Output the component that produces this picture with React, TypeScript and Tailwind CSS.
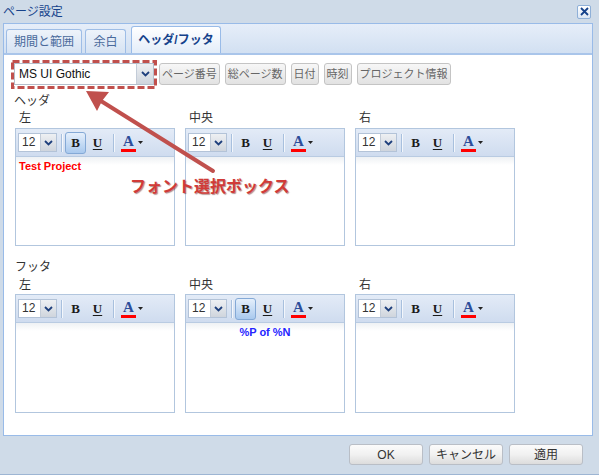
import React from 'react';

const jp = "font-['Liberation_Sans','Noto_Sans_CJK_JP',sans-serif]";

const Chevron = () => (
    <svg width="9" height="6" viewBox="0 0 9 6">
        <path d="M1 1 L4.5 4.5 L8 1" fill="none" stroke="#1e3f7c" strokeWidth="1.8" />
    </svg>
);

const SizeBox = () => (
    <div className="flex h-[19px] w-[39px] border border-[#b3c3d8] bg-white">
        <div className="flex-1 pl-[3px] text-[12px] leading-[17px] text-[#333]">12</div>
        <div className="flex w-[16px] items-center justify-center border-l border-[#c3ccd8] bg-gradient-to-b from-[#eef0f3] to-[#cfd5dd]">
            <Chevron />
        </div>
    </div>
);

const Sep = ({ ml }: { ml: string }) => (
    <div className={`h-[18px] w-[2px] border-l border-[#a8c0de] bg-white/70 ${ml}`} />
);

const Toolbar = ({ bold }: { bold?: boolean }) => (
    <div className="flex h-[28px] items-center border-b border-[#b9cbe2] bg-gradient-to-b from-[#e3ebf7] to-[#cfdcef] pl-[2px]">
        <SizeBox />
        <Sep ml="ml-[4px]" />
        <div
            className={
                bold
                    ? 'ml-[2px] flex h-[22px] w-[21px] items-center justify-center rounded-[3px] border border-[#84a9d6] bg-gradient-to-b from-[#e5effb] to-[#a9c9ee]'
                    : 'ml-[2px] flex h-[22px] w-[21px] items-center justify-center'
            }
        >
            <span className="font-['Liberation_Serif',serif] text-[13px] font-bold leading-none text-[#1a1a1a]">B</span>
        </div>
        <div className="ml-[1px] flex h-[22px] w-[21px] items-center justify-center">
            <span className="font-['Liberation_Serif',serif] text-[13px] font-bold leading-none text-[#1a1a1a] underline underline-offset-2">U</span>
        </div>
        <Sep ml="ml-[5px]" />
        <div className="ml-[6px] flex h-[22px] items-center">
            <div className="flex w-[15px] flex-col items-center">
                <span className="font-['Liberation_Serif',serif] text-[15px] font-bold leading-[14px] text-[#2c4d9a]">A</span>
                <div className="mt-[1px] h-[3px] w-[15px] bg-[#ff0000]" />
            </div>
            <svg className="ml-[2px]" width="5" height="3" viewBox="0 0 5 3">
                <path d="M0 0 L5 0 L2.5 3 Z" fill="#222" />
            </svg>
        </div>
    </div>
);

const Editor = ({ label, h, bold, children, labelPt }: { label: string; h: string; bold?: boolean; children?: React.ReactNode; labelPt: string }) => (
    <div className="w-[160px]">
        <div className={`h-[20px] pl-[4px] text-[12px] leading-[14px] text-[#333] ${labelPt}`}>{label}</div>
        <div className={`flex flex-col border border-[#b2c6de] bg-white ${h}`}>
            <Toolbar bold={bold} />
            <div className="flex-1 bg-gradient-to-b from-[#eef1f4] to-white to-[8px] pt-[3px]">{children}</div>
        </div>
    </div>
);

const ToolButton = ({ children }: { children: React.ReactNode }) => (
    <div className="flex h-[22px] items-center rounded-[3px] border border-[#c4c4c4] bg-gradient-to-b from-[#f7f7f7] to-[#e2e2e2] px-[2px] text-[11px] text-[#666]">
        {children}
    </div>
);

const FootButton = ({ children }: { children: React.ReactNode }) => (
    <div className="flex h-[21px] w-[74px] items-center justify-center rounded-[3px] border border-[#b9bec6] bg-gradient-to-b from-[#fbfbfb] via-[#f1f1f1] to-[#dcdcdc] text-[12px] text-[#333]">
        {children}
    </div>
);

export default function App() {
    return (
        <div className={`relative flex h-[475px] w-[599px] flex-col overflow-hidden border-b border-[#9db5d3] bg-[#cfdbe8] ${jp}`}>
            {/* title bar */}
            <div className="flex h-[23px] items-center justify-between pl-[3px] pr-[8px]">
                <span className="text-[12px] text-[#15428b]">ページ設定</span>
                <div className="flex h-[14px] w-[14px] items-center justify-center rounded-[2px] border border-[#8fb0d8] bg-gradient-to-b from-white to-[#dbe6f4]">
                    <svg width="9" height="9" viewBox="0 0 9 9">
                        <path d="M1 1 L8 8 M8 1 L1 8" stroke="#15428b" strokeWidth="1.8" />
                    </svg>
                </div>
            </div>

            {/* tab panel */}
            <div className="ml-[3px] flex w-[590px] flex-col border border-[#99bbe8]">
                <div className="flex h-[31px] items-end gap-[3px] border-b-[2px] border-[#a9c5ea] bg-gradient-to-b from-[#e6eef9] to-[#d2e0f2] pl-[2px]">
                    <div className="flex h-[24px] w-[76px] items-center justify-center rounded-t-[3px] border border-b-0 border-[#9ebde6] bg-gradient-to-b from-[#eef3fa] to-[#d6e3f3] text-[12px] text-[#4a6a9c]">
                        期間と範囲
                    </div>
                    <div className="flex h-[24px] w-[41px] items-center justify-center rounded-t-[3px] border border-b-0 border-[#9ebde6] bg-gradient-to-b from-[#eef3fa] to-[#d6e3f3] text-[12px] text-[#4a6a9c]">
                        余白
                    </div>
                    <div className="ml-[2px] flex h-[27px] w-[90px] items-center justify-center rounded-t-[3px] border border-b-0 border-[#99bbe8] bg-gradient-to-b from-[#ffffff] to-[#e3edf9] text-[12px] font-bold text-[#15428b]">
                        ヘッダ/フッタ
                    </div>
                </div>

                <div className="h-[380px] bg-white pt-[5px] text-[#333]">
                    {/* font row */}
                    <div className="flex h-[29px] items-start pl-[7px]">
                        <div className="relative h-[29px] w-[146px] p-[3px]">
                            <div className="flex h-[22px] border border-[#b5bfcc] bg-white">
                                <div className="flex-1 pl-[4px] text-[12px] leading-[20px] text-[#111]">MS UI Gothic</div>
                                <div className="flex w-[17px] items-center justify-center border-l border-[#c3ccd8] bg-gradient-to-b from-[#eef0f3] to-[#cfd5dd]">
                                    <Chevron />
                                </div>
                            </div>
                            <svg className="pointer-events-none absolute inset-0" width="146" height="29">
                                <rect x="1.5" y="1.5" width="143" height="26" fill="none" stroke="#c0504d" strokeWidth="3" strokeDasharray="7 3" />
                            </svg>
                        </div>
                        <div className="ml-[2px] mt-[3px] flex gap-[5px]">
                            <ToolButton>ページ番号</ToolButton>
                            <ToolButton>総ページ数</ToolButton>
                            <ToolButton>日付</ToolButton>
                            <ToolButton>時刻</ToolButton>
                            <ToolButton>プロジェクト情報</ToolButton>
                        </div>
                    </div>

                    {/* header */}
                    <div className="mt-[5px] h-[14px] pl-[10px] text-[12px] leading-[14px]">ヘッダ</div>
                    <div className="flex gap-[10px] pl-[11px]">
                        <Editor label="左" h="h-[118px]" bold labelPt="pt-[3px]">
                            <div className="pl-[3px] font-['Liberation_Sans',sans-serif] text-[11px] font-bold leading-[13px] text-[#ff0000]">Test Project</div>
                        </Editor>
                        <Editor label="中央" h="h-[118px]" labelPt="pt-[3px]" />
                        <Editor label="右" h="h-[118px]" labelPt="pt-[3px]" />
                    </div>

                    {/* footer */}
                    <div className="mt-[14px] h-[14px] pl-[11px] text-[12px] leading-[14px]">フッタ</div>
                    <div className="flex gap-[10px] pl-[11px]">
                        <Editor label="左" h="h-[119px]" labelPt="pt-[4px]" />
                        <Editor label="中央" h="h-[119px]" bold labelPt="pt-[4px]">
                            <div className="text-center font-['Liberation_Sans',sans-serif] text-[11px] font-bold leading-[13px] text-[#2424ff]">%P of %N</div>
                        </Editor>
                        <Editor label="右" h="h-[119px]" labelPt="pt-[4px]" />
                    </div>
                </div>
            </div>

            {/* buttons */}
            <div className="flex justify-end gap-[6px] pr-[16px] pt-[8px]">
                <FootButton>OK</FootButton>
                <FootButton>キャンセル</FootButton>
                <FootButton>適用</FootButton>
            </div>

            {/* annotation */}
            <svg className="pointer-events-none absolute left-0 top-0" width="599" height="475">
                <line x1="213" y1="171" x2="101" y2="101" stroke="#c0504d" strokeWidth="4" strokeLinecap="round" />
                <path d="M86 91 L109 92 L102 101 L97 111 Z" fill="#c0504d" />
            </svg>
            <div className="absolute left-[130px] top-[178px] text-[16px] font-bold leading-[18px] text-[#d13b37] [text-shadow:1px_1px_1px_rgba(80,0,0,0.45)]">
                フォント選択ボックス
            </div>
        </div>
    );
}
